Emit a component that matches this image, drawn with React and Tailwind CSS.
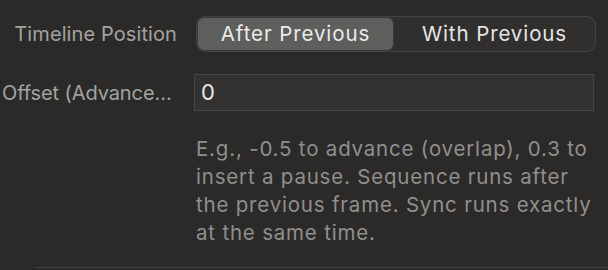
export default function App() {
  return (
    <div
      className="w-[608px] h-[270px] bg-[#2b2a29] overflow-hidden"
      style={{ fontFamily: "Inter, 'Noto Sans', sans-serif" }}
    >
      <div className="flex items-center h-[36px] mt-[16px]">
        <div className="w-[178px] text-right text-[20px] tracking-[0.1px] text-[#a3a3a2] pr-[1px] whitespace-nowrap">
          Timeline Position
        </div>
        <div className="ml-[18px] w-[400px] h-[36px] flex rounded-[9px] border border-[#444342] bg-[#302f2e]">
          <div className="w-[197px] flex items-center justify-center rounded-[7px] bg-[#5e5e5d] border border-[#3a3938] text-[20.5px] tracking-[0.9px] text-[#ebebea]">
            After Previous
          </div>
          <div className="flex-1 flex items-center justify-center text-[20.5px] tracking-[0.9px] text-[#e6e6e5]">
            With Previous
          </div>
        </div>
      </div>

      <div className="flex items-center h-[37px] mt-[22px]">
        <div className="w-[175px] shrink-0 pl-[2px] text-[20px] tracking-[-0.1px] text-[#a3a3a2] truncate">
          Offset (Advance Seconds)
        </div>
        <div className="ml-[19px] w-[400px] h-[37px] flex items-center bg-[#333231] border border-[#474645] px-[6px] text-[22px] text-[#e8e8e7]">
          0
        </div>
      </div>

      <p className="ml-[196px] mt-[24px] w-[404px] text-[20.5px] leading-[28px] tracking-[0.8px] text-[#8f8f8e]">
        E.g., -0.5 to advance (overlap), 0.3 to insert a pause. Sequence runs after the previous frame. Sync runs exactly at the same time.
      </p>

      <div className="ml-[36px] mt-[20px] h-px bg-[#434342]" />
    </div>
  );
}
